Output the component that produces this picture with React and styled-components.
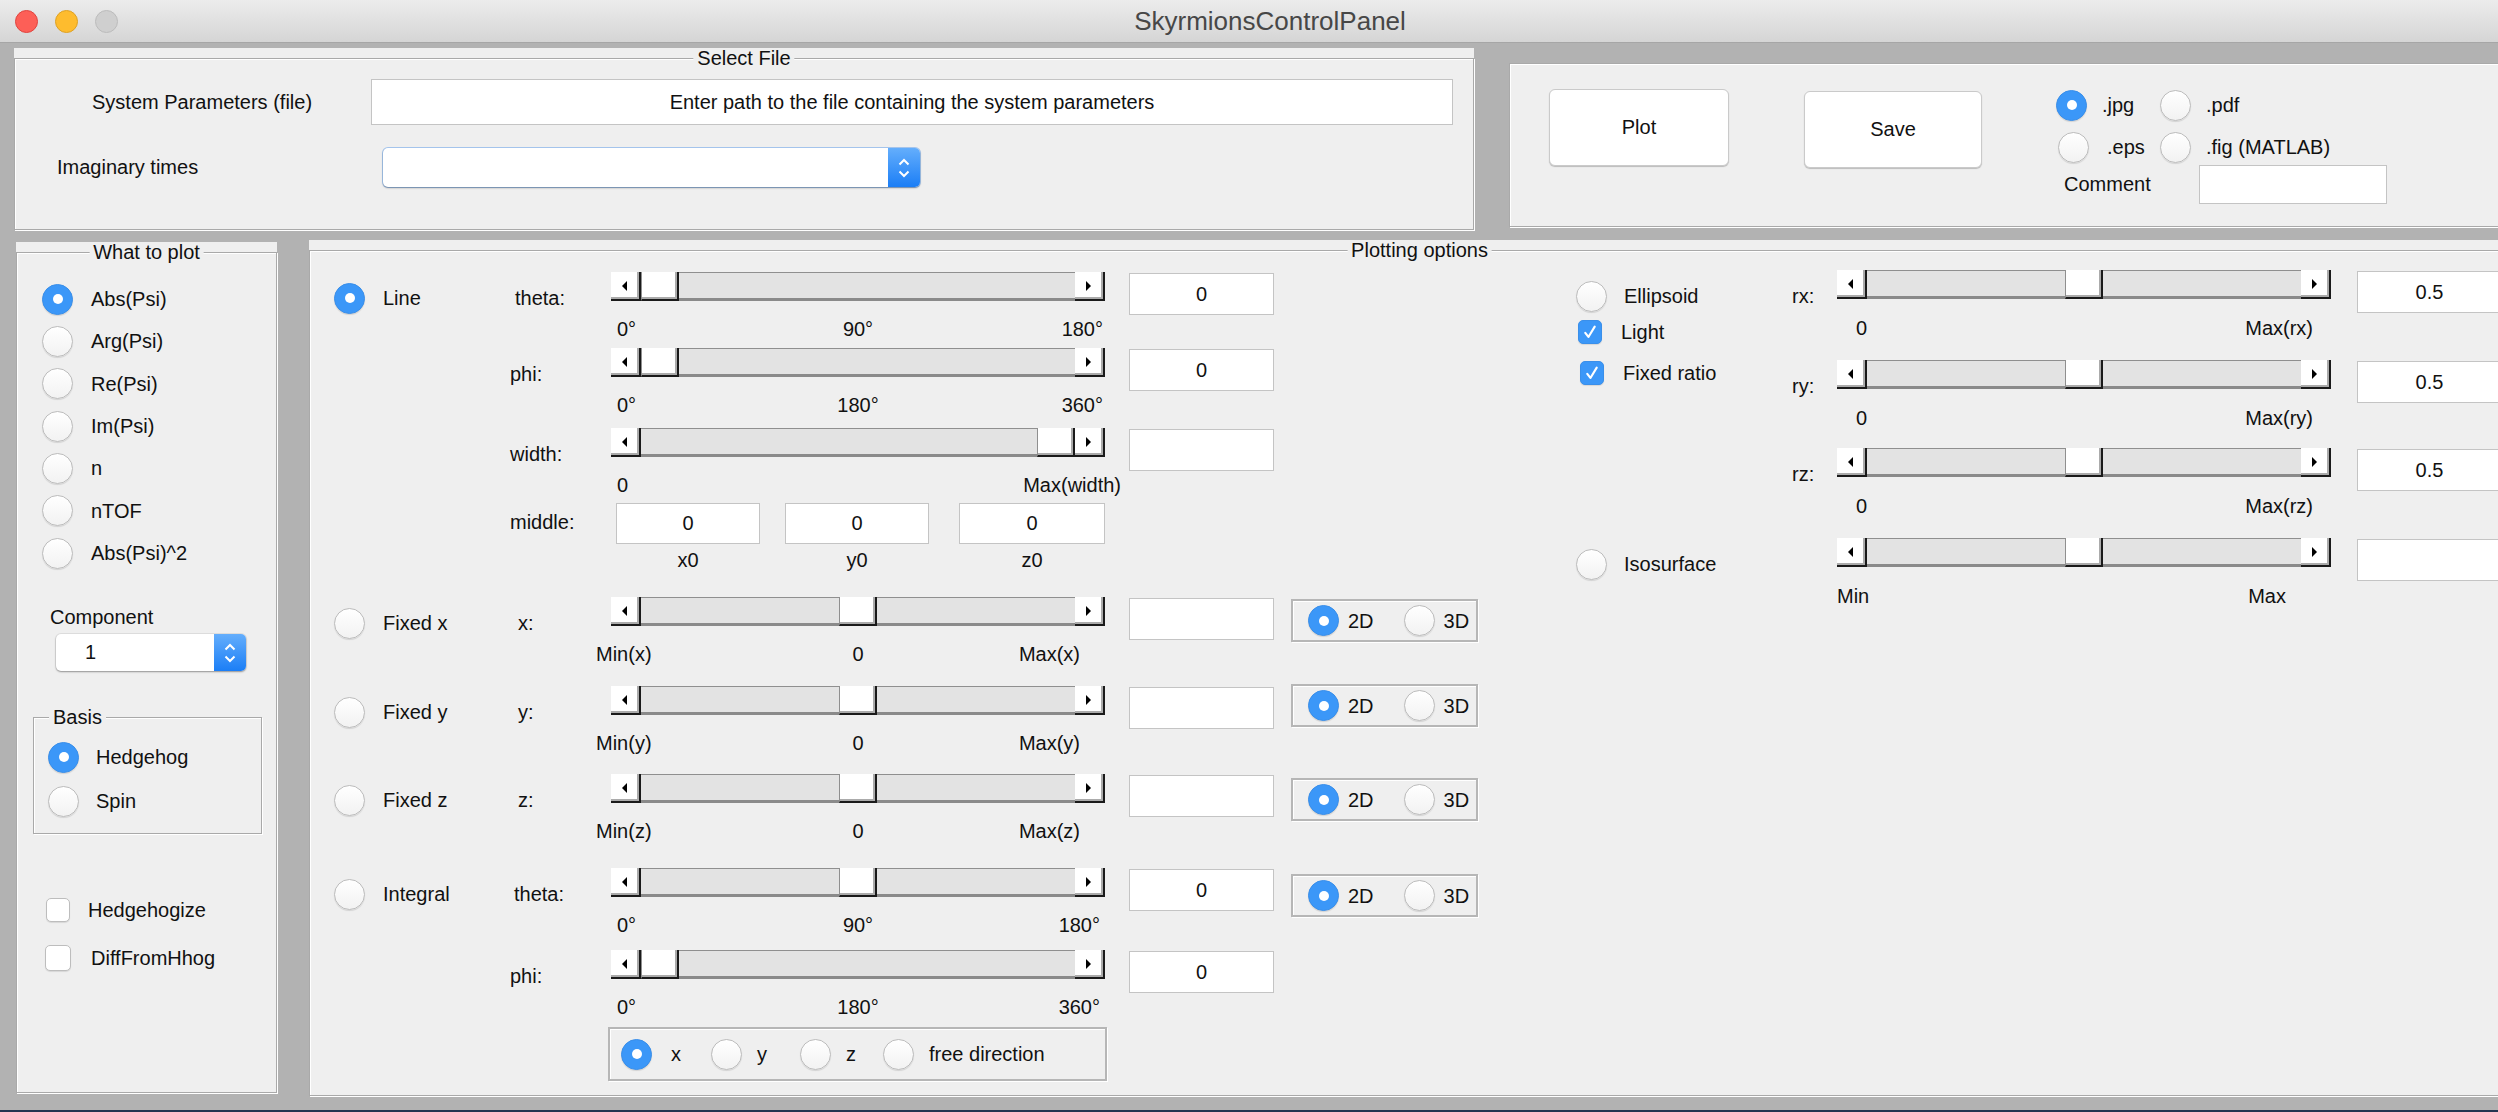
import styled, { createGlobalStyle } from "styled-components";

const GlobalStyle = createGlobalStyle`
  html, body {
    margin: 0;
    padding: 0;
    background: #243550;
  }
  body {
    font-family: "Liberation Sans", Arial, sans-serif;
    color: #111;
  }
  #root {
    width: 2498px;
    height: 1112px;
    overflow: hidden;
  }
`;

/* window chrome */

const Window = styled.div`
  width: 2540px;
  height: 1110px;
  background: #b2b2b2;
  display: flex;
  flex-direction: column;
`;

const TitleBar = styled.div`
  height: 42px;
  flex-shrink: 0;
  border-bottom: 1px solid #a6a6a6;
  background: linear-gradient(#ececec, #d5d5d5);
  display: grid;
  grid-template-columns: 1fr auto 1fr;
  align-items: center;
`;

const Lights = styled.div`
  display: flex;
  gap: 17px;
  padding-left: 15px;
`;

const Light = styled.span`
  width: 23px;
  height: 23px;
  border-radius: 50%;
  box-sizing: border-box;
  background: ${(p) => p.$c};
  border: 1px solid ${(p) => p.$b};
`;

const WindowTitle = styled.div`
  font-size: 26px;
  color: #474747;
`;

const TopRow = styled.div`
  display: flex;
  align-items: flex-start;
  padding-left: 14px;
  margin-top: 5px;
`;

const BottomRow = styled.div`
  display: flex;
  align-items: flex-start;
  padding-left: 16px;
  margin-top: 10px;
`;

/* panels */

const PanelShell = styled.div`
  position: relative;
  flex-shrink: 0;
  width: ${(p) => p.$w}px;
  height: ${(p) => p.$h}px;
  margin: ${(p) => p.$m || "0"};
  padding-top: ${(p) => (p.$titled ? 10 : 0)}px;
  box-sizing: border-box;
  background: #efefef;
  display: flex;
`;

const Frame = styled.div`
  flex: 1;
  min-width: 0;
  border: 1px solid #a9a9a9;
  box-shadow: inset 1px 1px 0 #fff, 1px 1px 0 #fff;
  display: flex;
  flex-direction: ${(p) => p.$dir || "column"};
  align-items: flex-start;
`;

const PanelTitle = styled.span`
  position: absolute;
  top: 0;
  ${(p) =>
    p.$left != null
      ? `left: ${p.$left}px;`
      : "left: 50%; transform: translateX(-50%);"}
  padding: 0 4px;
  background: #efefef;
  font-size: 20px;
  line-height: 20px;
  white-space: nowrap;
`;

const Panel = ({ title, titleLeft, w, h, m, dir, children }) => (
  <PanelShell $w={w} $h={h} $m={m} $titled={!!title}>
    {title && <PanelTitle $left={titleLeft}>{title}</PanelTitle>}
    <Frame $dir={dir}>{children}</Frame>
  </PanelShell>
);

/* basic controls */

const Text = styled.span`
  font-size: 20px;
  line-height: 20px;
  white-space: nowrap;
  color: #111;
`;

const RadioDot = styled.span`
  position: relative;
  width: 31px;
  height: 31px;
  flex-shrink: 0;
  box-sizing: border-box;
  border-radius: 50%;
  background: ${(p) => (p.$on ? "#3b97f8" : "linear-gradient(#ffffff, #f2f2f2)")};
  border: 1px solid ${(p) => (p.$on ? "#3a8fea" : "#bcbcbc")};
  box-shadow: 0 1px 1px rgba(0, 0, 0, 0.12);

  &::after {
    content: "";
    display: ${(p) => (p.$on ? "block" : "none")};
    position: absolute;
    left: 50%;
    top: 50%;
    width: 10px;
    height: 10px;
    margin: -5px 0 0 -5px;
    border-radius: 50%;
    background: #fff;
  }
`;

const Option = styled.div`
  display: flex;
  align-items: center;
  gap: ${(p) => p.$gap ?? 18}px;
  height: ${(p) => p.$h ?? 52}px;
  margin-left: ${(p) => p.$ml || 0}px;
  flex-shrink: 0;
`;

const RadioOption = ({ on, label, gap, h, ml }) => (
  <Option $gap={gap} $h={h} $ml={ml}>
    <RadioDot $on={on} />
    <Text>{label}</Text>
  </Option>
);

const CheckBox = styled.span`
  width: ${(p) => p.$s || 24}px;
  height: ${(p) => p.$s || 24}px;
  flex-shrink: 0;
  box-sizing: border-box;
  border-radius: 5px;
  background: ${(p) => (p.$on ? "#3b97f8" : "#fff")};
  border: 1px solid ${(p) => (p.$on ? "#3a8fea" : "#bdbdbd")};
  box-shadow: 0 1px 1px rgba(0, 0, 0, 0.1);
  display: flex;
  align-items: center;
  justify-content: center;
`;

const CheckRow = styled.div`
  display: flex;
  align-items: center;
  gap: ${(p) => p.$gap ?? 19}px;
  height: ${(p) => p.$h ?? 24}px;
  margin: ${(p) => p.$mt || 0}px 0 0 ${(p) => p.$ml || 0}px;
`;

const Check = ({ on, size, label, ...rest }) => (
  <CheckRow {...rest}>
    <CheckBox $on={on} $s={size}>
      {on && (
        <svg width="18" height="18" viewBox="0 0 16 16">
          <path d="M3.8 8.8 L6.6 12.4 L12.2 3.2" fill="none" stroke="#fff" strokeWidth="1.9" strokeLinecap="round" strokeLinejoin="round" />
        </svg>
      )}
    </CheckBox>
    <Text>{label}</Text>
  </CheckRow>
);

const PopupBox = styled.div`
  display: flex;
  flex-shrink: 0;
  width: ${(p) => p.$w}px;
  height: ${(p) => p.$h}px;
  margin: ${(p) => p.$m || "0"};
  background: #fff;
  border-radius: 5px;
  overflow: hidden;
  box-shadow: 0 1px 2px rgba(0, 0, 0, 0.35),
    0 0 0 1px ${(p) => (p.$focus ? "#a7c8f0" : "rgba(0, 0, 0, 0.06)")};
`;

const PopupValue = styled.span`
  flex: 1;
  display: flex;
  align-items: center;
  padding-left: ${(p) => p.$pl || 10}px;
  font-size: 20px;
`;

const Stepper = styled.span`
  width: 32px;
  background: linear-gradient(#64aefc, #1b7ef6);
  display: flex;
  flex-direction: column;
  align-items: center;
  justify-content: center;
  gap: 4px;
`;

const Popup = ({ value, pl, ...rest }) => (
  <PopupBox {...rest}>
    <PopupValue $pl={pl}>{value}</PopupValue>
    <Stepper>
      <svg width="12" height="8" viewBox="0 0 12 8">
        <path d="M1.5 6.5 L6 2 L10.5 6.5" fill="none" stroke="#fff" strokeWidth="2" />
      </svg>
      <svg width="12" height="8" viewBox="0 0 12 8">
        <path d="M1.5 1.5 L6 6 L10.5 1.5" fill="none" stroke="#fff" strokeWidth="2" />
      </svg>
    </Stepper>
  </PopupBox>
);

const EditField = styled.div`
  flex-shrink: 0;
  width: ${(p) => p.$w || 145}px;
  height: ${(p) => p.$h || 42}px;
  margin: ${(p) => p.$m || "0"};
  box-sizing: border-box;
  background: #fff;
  border: 1px solid #c4c4c4;
  font-size: 20px;
  display: flex;
  align-items: center;
  justify-content: center;
  white-space: nowrap;
`;

const PushButton = styled.div`
  flex-shrink: 0;
  width: ${(p) => p.$w}px;
  height: 77px;
  margin: ${(p) => p.$m};
  box-sizing: border-box;
  background: #fff;
  border: 1px solid #cacaca;
  border-radius: 6px;
  box-shadow: 0 1px 1px rgba(0, 0, 0, 0.22);
  font-size: 20px;
  display: flex;
  align-items: center;
  justify-content: center;
`;

/* slider */

const SliderBar = styled.div`
  display: flex;
  width: 494px;
  height: 29px;
`;

const StepBtn = styled.span`
  width: 30px;
  flex-shrink: 0;
  box-sizing: border-box;
  background: #fff;
  border-right: 2px solid #1a1a1a;
  border-bottom: 2px solid #1a1a1a;
  box-shadow: inset -2px -2px 0 #ababab;
  display: flex;
  align-items: center;
  justify-content: center;

  &::before {
    content: "";
    border-top: 5px solid transparent;
    border-bottom: 5px solid transparent;
    ${(p) =>
      p.$dir === "left"
        ? "border-right: 5px solid #000; margin-right: 2px;"
        : "border-left: 5px solid #000; margin-right: 2px;"}
  }
`;

const TrackPart = styled.span`
  min-width: 0;
  box-sizing: border-box;
  background: #e3e3e3;
  border-top: 1px solid #8f8f8f;
  border-bottom: 3px solid #8a8a8a;
`;

const Thumb = styled.span`
  width: 38px;
  flex-shrink: 0;
  box-sizing: border-box;
  background: #fff;
  border-right: 2px solid #1a1a1a;
  border-bottom: 2px solid #1a1a1a;
  border-left: 1px solid #8f8f8f;
  box-shadow: inset -2px -2px 0 #ababab;
`;

const Slider = ({ pos = 0 }) => (
  <SliderBar>
    <StepBtn $dir="left" />
    <TrackPart style={{ flex: `${pos} 1 0px` }} />
    <Thumb />
    <TrackPart style={{ flex: `${1 - pos} 1 0px` }} />
    <StepBtn $dir="right" />
  </SliderBar>
);

const Ticks = styled.div`
  display: grid;
  grid-template-columns: 1fr auto 1fr;
  margin-top: ${(p) => p.$mt ?? 18}px;
  font-size: 20px;
  line-height: 20px;
  white-space: nowrap;

  & > span:first-child {
    margin-left: ${(p) => p.$l || 0}px;
  }
  & > span:last-child {
    justify-self: end;
    margin-right: ${(p) => p.$r || 0}px;
  }
`;

/* plotting options layout */

const Section = styled.div`
  flex-shrink: 0;
  display: flex;
  flex-direction: column;
  width: ${(p) => (p.$w ? `${p.$w}px` : "auto")};
  margin: ${(p) => p.$m};
`;

const Block = styled.div`
  display: flex;
  align-items: flex-start;
  height: ${(p) => p.$h}px;
  flex-shrink: 0;
`;

const OptCell = styled.div`
  width: ${(p) => p.$w}px;
  flex-shrink: 0;
  display: flex;
  flex-direction: column;
`;

const ParamCell = styled.div`
  width: ${(p) => p.$w}px;
  height: ${(p) => p.$h || 52}px;
  line-height: ${(p) => p.$h || 52}px;
  padding-left: ${(p) => p.$pl || 0}px;
  box-sizing: border-box;
  flex-shrink: 0;
  font-size: 20px;
  white-space: nowrap;
`;

const SliderCol = styled.div`
  width: 494px;
  flex-shrink: 0;
  display: flex;
  flex-direction: column;
`;

const GroupBox = styled.div`
  flex-shrink: 0;
  display: flex;
  align-items: center;
  box-sizing: border-box;
  width: ${(p) => p.$w}px;
  height: ${(p) => p.$h}px;
  margin: ${(p) => p.$m};
  padding-left: ${(p) => p.$pl}px;
  border: 2px solid #b6b6b6;
  box-shadow: inset 1px 1px 0 #fff, 1px 1px 0 #fff;
`;

const ModeBox = ({ top }) => (
  <GroupBox $w={187} $h={43} $m={`${top}px 0 0 17px`} $pl={15}>
    <RadioOption on label="2D" gap={9} h={40} />
    <RadioOption label="3D" gap={9} h={40} ml={30} />
  </GroupBox>
);

const SliderBlock = ({
  h,
  optW = 176,
  paramW = 101,
  option,
  param,
  pl,
  pos,
  ticks = ["", "", ""],
  tl,
  tr,
  tmt,
  value = "",
  valueGap = 24,
  mode,
  modeTop = 2,
}) => (
  <Block $h={h}>
    <OptCell $w={optW}>{option}</OptCell>
    <ParamCell $w={paramW} $pl={pl}>
      {param}
    </ParamCell>
    <SliderCol>
      <Slider pos={pos} />
      <Ticks $l={tl} $r={tr} $mt={tmt}>
        {ticks.map((t, i) => (
          <span key={i}>{t}</span>
        ))}
      </Ticks>
    </SliderCol>
    <EditField $m={`1px 0 0 ${valueGap}px`}>{value}</EditField>
    {mode && <ModeBox top={modeTop} />}
  </Block>
);

const MidRow = styled.div`
  display: flex;
  padding-left: 5px;
`;

const MidItem = styled.div`
  display: flex;
  flex-direction: column;
  align-items: center;
  margin-left: ${(p) => p.$ml || 0}px;
`;

const MidLabel = styled.span`
  margin-top: 6px;
  font-size: 20px;
  line-height: 20px;
`;

/* left column pieces */

const ListBox = styled.div`
  display: flex;
  flex-direction: column;
  margin: ${(p) => p.$m};
`;

const FieldLabel = styled.div`
  margin: ${(p) => p.$m};
  font-size: 20px;
  line-height: 20px;
  white-space: nowrap;
`;

const FileRow = styled.div`
  display: flex;
  align-items: center;
  height: ${(p) => p.$h}px;
  margin-top: ${(p) => p.$mt}px;
`;

const RowLabel = styled.div`
  width: ${(p) => p.$w}px;
  padding-left: ${(p) => p.$pl}px;
  box-sizing: border-box;
  flex-shrink: 0;
  font-size: 20px;
  white-space: nowrap;
`;

const FormatGrid = styled.div`
  display: grid;
  grid-template-columns: 104px auto;
  margin-top: 20px;
`;

const OutputOptions = styled.div`
  display: flex;
  flex-direction: column;
  margin-left: 74px;
`;

const CommentRow = styled.div`
  display: flex;
  align-items: center;
  height: 39px;
  margin-top: -3px;
`;

const plotWhat = ["Abs(Psi)", "Arg(Psi)", "Re(Psi)", "Im(Psi)", "n", "nTOF", "Abs(Psi)^2"];

const App = () => (
  <>
    <GlobalStyle />
    <Window>
      <TitleBar>
        <Lights>
          <Light $c="#fd5f57" $b="#e0443e" />
          <Light $c="#febc2e" $b="#dea123" />
          <Light $c="#cfcfcf" $b="#bcbcbc" />
        </Lights>
        <WindowTitle>SkyrmionsControlPanel</WindowTitle>
      </TitleBar>

      <TopRow>
        <Panel title="Select File" w={1460} h={182}>
          <FileRow $h={46} $mt={20}>
            <RowLabel $w={356} $pl={77}>System Parameters (file)</RowLabel>
            <EditField $w={1082} $h={46}>
              Enter path to the file containing the system parameters
            </EditField>
          </FileRow>
          <FileRow $h={39} $mt={23}>
            <RowLabel $w={368} $pl={42}>Imaginary times</RowLabel>
            <Popup value="" $w={537} $h={39} $focus />
          </FileRow>
        </Panel>

        <Panel w={1021} h={164} m="15px 0 0 35px" dir="row">
          <PushButton $w={180} $m="25px 0 0 39px">Plot</PushButton>
          <PushButton $w={178} $m="27px 0 0 75px">Save</PushButton>
          <OutputOptions>
            <FormatGrid>
              <RadioOption on label=".jpg" gap={15} h={42} />
              <RadioOption label=".pdf" gap={15} h={42} />
              <RadioOption label=".eps" gap={18} h={42} ml={2} />
              <RadioOption label=".fig (MATLAB)" gap={15} h={42} />
            </FormatGrid>
            <CommentRow>
              <RowLabel $w={143} $pl={8}>Comment</RowLabel>
              <EditField $w={188} $h={39} />
            </CommentRow>
          </OutputOptions>
        </Panel>
      </TopRow>

      <BottomRow>
        <Panel title="What to plot" w={261} h={851} m="2px 0 0 0">
          <ListBox $m="25px 0 0 25px">
            {plotWhat.map((label, i) => (
              <RadioOption key={label} on={i === 0} label={label} h={42.33} />
            ))}
          </ListBox>
          <FieldLabel $m="33px 0 0 33px">Component</FieldLabel>
          <Popup value="1" pl={29} $w={190} $h={37} $m="7px 0 0 39px" />
          <Panel title="Basis" titleLeft={16} w={229} h={127} m="36px 0 0 16px">
            <ListBox $m="17px 0 0 14px">
              <RadioOption on label="Hedgehog" gap={17} h={44} />
              <RadioOption label="Spin" gap={17} h={44} />
            </ListBox>
          </Panel>
          <ListBox $m="52px 0 0 0">
            <Check label="Hedgehogize" $h={48} $ml={29} $gap={18} />
            <Check label="DiffFromHhog" size={26} $h={48} $ml={28} $gap={20} />
          </ListBox>
        </Panel>

        <Panel title="Plotting options" w={2221} h={856} m="0 0 0 32px" dir="row">
          <Section $w={1144} $m="21px 0 0 24px">
            <SliderBlock h={76} option={<RadioOption on label="Line" />} param="theta:" pl={5} pos={0} ticks={["0°", "90°", "180°"]} tl={6} tr={2} value="0" />
            <SliderBlock h={80} param="phi:" pos={0} ticks={["0°", "180°", "360°"]} tl={6} tr={2} value="0" />
            <SliderBlock h={75} param="width:" pos={1} ticks={["0", "", "Max(width)"]} tl={6} tr={-16} value="" />
            <Block $h={94}>
              <OptCell $w={176} />
              <ParamCell $w={101} $h={38}>middle:</ParamCell>
              <MidRow>
                <MidItem>
                  <EditField $w={144} $h={41}>0</EditField>
                  <MidLabel>x0</MidLabel>
                </MidItem>
                <MidItem $ml={25}>
                  <EditField $w={144} $h={41}>0</EditField>
                  <MidLabel>y0</MidLabel>
                </MidItem>
                <MidItem $ml={30}>
                  <EditField $w={146} $h={41}>0</EditField>
                  <MidLabel>z0</MidLabel>
                </MidItem>
              </MidRow>
            </Block>
            <SliderBlock h={89} option={<RadioOption label="Fixed x" />} param="x:" pl={8} pos={0.5} ticks={["Min(x)", "0", "Max(x)"]} tl={-15} tr={25} mode modeTop={2} />
            <SliderBlock h={88} option={<RadioOption label="Fixed y" />} param="y:" pl={8} pos={0.5} ticks={["Min(y)", "0", "Max(y)"]} tl={-15} tr={25} mode modeTop={-2} />
            <SliderBlock h={94} option={<RadioOption label="Fixed z" />} param="z:" pl={8} pos={0.5} ticks={["Min(z)", "0", "Max(z)"]} tl={-15} tr={25} mode modeTop={4} />
            <SliderBlock h={82} option={<RadioOption label="Integral" />} param="theta:" pl={4} pos={0.5} ticks={["0°", "90°", "180°"]} tl={6} tr={5} value="0" mode modeTop={6} />
            <SliderBlock h={77} param="phi:" pos={0} ticks={["0°", "180°", "360°"]} tl={6} tr={5} value="0" />
            <GroupBox $w={499} $h={54} $m="0 0 0 274px" $pl={11}>
              <RadioOption on label="x" gap={19} h={50} />
              <RadioOption label="y" gap={15} h={50} ml={30} />
              <RadioOption label="z" gap={15} h={50} ml={33} />
              <RadioOption label="free direction" gap={15} h={50} ml={27} />
            </GroupBox>
          </Section>

          <Section $m="19px 0 0 98px">
            <SliderBlock
              h={90}
              optW={216}
              paramW={45}
              option={
                <>
                  <RadioOption label="Ellipsoid" gap={17} />
                  <Check on label="Light" $mt={-2} $ml={2} />
                  <Check on label="Fixed ratio" $mt={17} $ml={4} />
                </>
              }
              param="rx:"
              pos={0.5}
              ticks={["0", "", "Max(rx)"]}
              tl={19}
              tr={18}
              tmt={19}
              value="0.5"
              valueGap={26}
            />
            <SliderBlock h={88} optW={216} paramW={45} param="ry:" pos={0.5} ticks={["0", "", "Max(ry)"]} tl={19} tr={18} tmt={19} value="0.5" valueGap={26} />
            <SliderBlock h={90} optW={216} paramW={45} param="rz:" pos={0.5} ticks={["0", "", "Max(rz)"]} tl={19} tr={18} tmt={19} value="0.5" valueGap={26} />
            <SliderBlock h={80} optW={216} paramW={45} option={<RadioOption label="Isosurface" gap={17} />} param="" pos={0.5} ticks={["Min", "", "Max"]} tl={0} tr={45} tmt={19} value="" valueGap={26} />
          </Section>
        </Panel>
      </BottomRow>
    </Window>
  </>
);

export default App;
